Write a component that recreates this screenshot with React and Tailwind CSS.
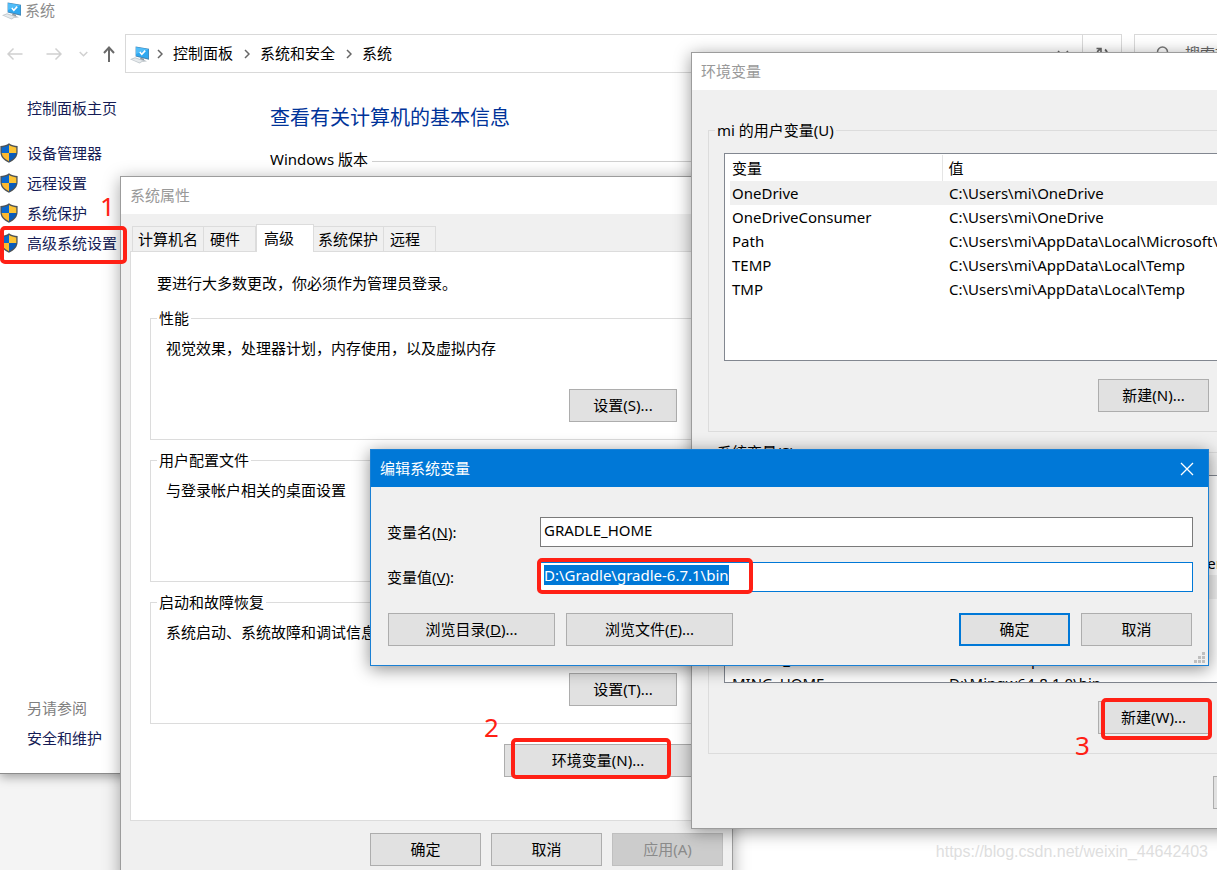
import React, { useEffect, useRef } from "react";

const userVariables = [
  ["OneDrive", "C:\\Users\\mi\\OneDrive"],
  ["OneDriveConsumer", "C:\\Users\\mi\\OneDrive"],
  ["Path", "C:\\Users\\mi\\AppData\\Local\\Microsoft\\WindowsApps"],
  ["TEMP", "C:\\Users\\mi\\AppData\\Local\\Temp"],
  ["TMP", "C:\\Users\\mi\\AppData\\Local\\Temp"],
];

const systemVariables = [
  ["ANDROID_HOME", "D:\\Android\\Sdk"],
  ["ComSpec", "C:\\WINDOWS\\system32\\cmd.exe"],
  ["DriverData", "C:\\WINDOWS\\System32\\Drivers\\DriverData"],
  ["GRADLE_HOME", "D:\\Gradle\\gradle-6.7.1\\bin"],
  ["JAVA_HOME", "D:\\Java\\jdk1.8.0"],
  ["KOTLIN", "D:\\Kotlin\\bin"],
  ["MAVEN_HOME", "D:\\Maven\\apache"],
  ["MING_HOME", "D:\\Mingw64-8.1.0\\bin"],
];

function ComputerIcon() {
  return (
    <svg className="size-5 shrink-0" viewBox="0 0 20 20" aria-hidden="true">
      <path d="M6.600 2.600 20 4.800V15.800L6.600 12.600Z" fill="#4784b0" />
      <path d="M7 3.200 19.400 5.200V14.600L7 11.800Z" fill="#2fa8f0" />
      <path d="M7 3.200 19.400 5.200 7 10Z" fill="#52bdf8" />
      <path d="m10.800 8 2 2.200 3.400-3.600" fill="none" stroke="#fff" strokeWidth="1.600" />
      <path d="M11.500 13.800 15 14.600V16.200L18 17.200 14 17.400 10.600 16Z" fill="#8f9ba3" />
      <path d="M1 15.200 6 13.200 15.400 16.600 10.600 19.400Z" fill="#c3cacf" />
      <path d="m3 15.400 3-1.200 7.400 2.600-2.800 1.600Z" fill="#e6eaec" />
    </svg>
  );
}

function ShieldIcon() {
  return (
    <svg className="h-5 w-[18px] shrink-0" viewBox="0 0 18 20" aria-hidden="true">
      <path d="M9 .3C6.600 2 3.500 3 .4 3.100V9c0 4.800 3.200 8.400 8.600 10.700C14.400 17.400 17.600 13.800 17.600 9V3.100C14.500 3 11.400 2 9 .3Z" fill="#4d5357" />
      <path d="M9 2C6.800 3.300 4.400 4.100 1.700 4.400V10H9Z" fill="#0b68cc" />
      <path d="M9 2c2.200 1.300 4.600 2.100 7.300 2.400V10H9Z" fill="#fcc434" />
      <path d="M1.700 10H9v8.200C4.700 16.200 2 13.600 1.700 10Z" fill="#fcb92e" />
      <path d="M16.300 10H9v8.200c4.300-2 7-4.600 7.300-8.200Z" fill="#0b5cba" />
    </svg>
  );
}

function Crumb({ children }) {
  return (
    <>
      <svg className="h-[10px] w-[6px] shrink-0" viewBox="0 0 6 10" fill="none" stroke="#666" strokeWidth="1.500" aria-hidden="true">
        <path d="m1 1 4 4-4 4" />
      </svg>
      <a href="#" className="mr-[11px] ml-[10px] whitespace-nowrap">{children}</a>
    </>
  );
}

function Button({ width = "w-[111px]", look = "border border-[#adadad] bg-[#e1e1e1]", children, ...rest }) {
  return (
    <button type="button" className={`h-[33px] shrink-0 whitespace-nowrap ${width} ${look}`} {...rest}>
      {children}
    </button>
  );
}

function Group({ title, className = "", children }) {
  return (
    <fieldset className={`min-w-0 border border-[#dcdcdc] ${className}`}>
      <legend className="ml-[6px] px-[2px] leading-5">{title}</legend>
      {children}
    </fieldset>
  );
}

function VariableGroup({ title, rows, selected, accessKey }) {
  return (
    <Group title={title}>
      <div className="px-[15px] pt-[13px] pb-[19px]">
        <div className="h-[208px] overflow-hidden border border-[#828790] bg-white pt-px pl-[5px]">
          <table className="w-full table-fixed text-left">
            <thead>
              <tr className="h-[26px]">
                <th className="w-[212px] pl-[2px] font-normal">变量</th>
                <th className="border-l border-[#e5e5e5] pl-[6px] font-normal">值</th>
              </tr>
            </thead>
            <tbody>
              {rows.map(([name, value], i) => (
                <tr key={name} className={i === selected ? "h-6 bg-[#f0f0f0]" : "h-6"}>
                  <td className="pl-[2px] leading-5">{name}</td>
                  <td className="pl-[7px] leading-5 whitespace-nowrap">{value}</td>
                </tr>
              ))}
            </tbody>
          </table>
        </div>
        <div className="mt-[18px] flex justify-end gap-[11px]">
          <Button>新建({accessKey})...</Button>
          <Button>编辑...</Button>
          <Button>删除</Button>
        </div>
      </div>
    </Group>
  );
}

function ControlPanelWindow() {
  return (
    <section className="relative flex h-[774px] w-full flex-col border-b border-[#8c8c8c] bg-white shadow-[0_3px_10px_rgba(0,0,0,0.35)]">
      <header className="flex h-5 items-center gap-1 pl-px text-[#8c8c8c]">
        <ComputerIcon />
        <h1>系统</h1>
      </header>
      <nav className="mt-[14px] flex h-[39px]">
        <div className="flex w-[125px] shrink-0 items-center pl-[7px] pt-px">
          <button type="button" aria-label="后退">
            <svg className="size-4" viewBox="0 0 16 16" fill="none" stroke="#d0d0d0" strokeWidth="1.500"><path d="M15.500 8H1M6.500 2.500 1 8l5.500 5.500" /></svg>
          </button>
          <button type="button" aria-label="前进" className="ml-[23px]">
            <svg className="size-4" viewBox="0 0 16 16" fill="none" stroke="#d0d0d0" strokeWidth="1.500"><path d="M.500 8H15M9.500 2.500 15 8l-5.500 5.500" /></svg>
          </button>
          <button type="button" aria-label="最近浏览的位置" className="ml-[17px]">
            <svg className="h-4 w-[9px]" viewBox="0 0 9 16" fill="none" stroke="#d0d0d0" strokeWidth="1.500"><path d="m.700 6 3.800 3.800L8.300 6" /></svg>
          </button>
          <button type="button" aria-label="上移" className="ml-[13px]">
            <svg className="size-4" viewBox="0 0 16 16" fill="none" stroke="#6a6a6a" strokeWidth="2"><path d="M8 16V2M3 7l5-5.500L13 7" /></svg>
          </button>
        </div>
        <div className="flex min-w-0 grow items-center border border-[#d9d9d9] pl-[3px]">
          <ComputerIcon />
          <div className="ml-2 flex grow items-center">
            <Crumb>控制面板</Crumb>
            <Crumb>系统和安全</Crumb>
            <Crumb>系统</Crumb>
          </div>
          <svg className="mr-[13px] h-2 w-3" viewBox="0 0 12 8" fill="none" stroke="#666" strokeWidth="1.500" aria-hidden="true"><path d="m1 1 5 5 5-5" /></svg>
          <button type="button" aria-label="刷新" className="flex h-full w-[39px] items-center justify-center border-l border-[#d9d9d9]">
            <svg className="size-4" viewBox="0 0 16 16" fill="none" stroke="#666" strokeWidth="1.600"><path d="M11 3.500A6 6 0 0 1 9 14M5 13A6 6 0 0 1 6.500 3M2.500 2.500H7V7" /></svg>
          </button>
        </div>
        <div className="ml-3 flex w-[83px] shrink-0 items-center gap-[14px] overflow-hidden border border-r-0 border-[#d9d9d9] pl-5 text-[#666]">
          <svg className="size-4 shrink-0" viewBox="0 0 16 16" fill="none" stroke="#777" strokeWidth="1.500" aria-hidden="true"><circle cx="7.500" cy="6" r="5" /><path d="M4 9.500 1 13" /></svg>
          <span className="whitespace-nowrap">搜索控制面板</span>
        </div>
      </nav>
      <div className="flex grow">
        <aside className="flex w-[270px] shrink-0 flex-col pt-[25px] pb-[25px] text-[#151c55]">
          <a href="#" className="ml-[27px] leading-5">控制面板主页</a>
          <ul className="mt-[25px] flex flex-col gap-[10px]">
            {["设备管理器", "远程设置", "系统保护", "高级系统设置"].map((item) => (
              <li key={item}>
                <a href="#" className="flex items-center gap-[9px] leading-5"><ShieldIcon />{item}</a>
              </li>
            ))}
          </ul>
          <p className="mt-auto ml-[27px] leading-5 text-[#808080]">另请参阅</p>
          <a href="#" className="mt-[10px] ml-[27px] leading-5">安全和维护</a>
        </aside>
        <main className="grow pt-[30px]">
          <h2 className="text-[20px] leading-[30px] text-[#003399]">查看有关计算机的基本信息</h2>
          <div className="mt-4 flex items-center gap-1 leading-5">
            <h3>Windows 版本</h3>
            <hr className="mt-1 grow border-[#d0d0d0]" />
          </div>
        </main>
      </div>
    </section>
  );
}

function PropertiesWindow() {
  const tab = "flex h-[25px] items-center border-t border-r border-[#dcdcdc] bg-[#f0f0f0] text-left";
  return (
    <section className="absolute top-[176px] left-[120px] w-[613px] border border-[#9c9c9c] bg-[#f0f0f0] shadow-[0_3px_16px_rgba(0,0,0,0.35)]">
      <header className="flex h-[37px] items-center bg-white pl-[9px] text-[#999]">
        <h2>系统属性</h2>
      </header>
      <div className="px-[9px] pt-[10px] pb-4">
        <div role="tablist" className="flex h-[27px] items-end pl-[2px]">
          <button type="button" role="tab" className={`${tab} w-[72px] border-l pl-[5px]`}>计算机名</button>
          <button type="button" role="tab" className={`${tab} w-[52px] pl-[6px]`}>硬件</button>
          <button type="button" role="tab" aria-selected="true" className="relative -mb-px flex h-7 w-[58px] items-center border border-b-0 border-[#dcdcdc] bg-white pl-[7px]">高级</button>
          <button type="button" role="tab" className={`${tab} w-[70px] pl-[4px]`}>系统保护</button>
          <button type="button" role="tab" className={`${tab} w-[52px] pl-[6px]`}>远程</button>
        </div>
        <div role="tabpanel" className="border border-[#dcdcdc] bg-white px-[19px] pt-[21px] pb-[43px]">
          <p className="ml-[7px] leading-5">要进行大多数更改，你必须作为管理员登录。</p>
          <div className="mt-[15px] flex flex-col gap-[10px]">
            {[
              ["性能", "视觉效果，处理器计划，内存使用，以及虚拟内存", "S"],
              ["用户配置文件", "与登录帐户相关的桌面设置", "E"],
              ["启动和故障恢复", "系统启动、系统故障和调试信息", "T"],
            ].map(([title, text, key]) => (
              <Group key={title} title={title} className="h-[132px]">
                <div className="flex flex-col pt-[10px] pr-[25px] pl-[15px]">
                  <p className="leading-5">{text}</p>
                  <div className="mt-[31px] flex justify-end">
                    <Button width="w-[108px]">设置({key})...</Button>
                  </div>
                </div>
              </Group>
            ))}
          </div>
          <div className="mt-5 flex justify-end pr-[11px]">
            <Button width="w-[188px]">环境变量(N)...</Button>
          </div>
        </div>
        <footer className="mt-3 flex justify-end gap-[10px]">
          <Button>确定</Button>
          <Button>取消</Button>
          <Button look="border border-[#bfbfbf] bg-[#cccccc] text-[#8a8a8a]" disabled>应用(A)</Button>
        </footer>
      </div>
    </section>
  );
}

function EnvironmentWindow() {
  return (
    <section className="absolute top-[52px] left-[691px] w-[795px] border border-[#9c9c9c] bg-[#f0f0f0] shadow-[0_3px_16px_rgba(0,0,0,0.4)]">
      <header className="flex h-[37px] items-center bg-white pl-[9px] text-[#999]">
        <h2>环境变量</h2>
      </header>
      <div className="px-4 pt-[30px] pb-[19px]">
        <div className="flex flex-col gap-[10px]">
          <VariableGroup title="mi 的用户变量(U)" rows={userVariables} selected={0} accessKey="N" />
          <VariableGroup title="系统变量(S)" rows={systemVariables} selected={3} accessKey="W" />
        </div>
        <footer className="mt-[22px] flex justify-end gap-[11px] pr-[23px]">
          <Button>确定</Button>
          <Button>取消</Button>
        </footer>
      </div>
    </section>
  );
}

function EditDialog() {
  const valueRef = useRef(null);
  useEffect(() => {
    valueRef.current.focus({ preventScroll: true });
    valueRef.current.select();
  }, []);
  const field = "h-[30px] min-w-0 grow border bg-white px-[3px] pt-[2px] pb-[6px] leading-5 outline-none";
  return (
    <section role="dialog" aria-labelledby="edit-title" className="absolute top-[449px] left-[370px] w-[839px] border border-[#1a80d4] bg-[#f0f0f0] shadow-[0_3px_16px_rgba(0,0,0,0.45)]">
      <header className="flex h-[37px] items-center justify-between bg-[#0078d7] pr-[14px] pl-[9px] text-white">
        <h2 id="edit-title">编辑系统变量</h2>
        <button type="button" aria-label="关闭">
          <svg className="size-[14px]" viewBox="0 0 14 14" fill="none" stroke="#fff" strokeWidth="1.300"><path d="m1 1 12 12M13 1 1 13" /></svg>
        </button>
      </header>
      <form className="px-[15px] pt-[30px] pb-[19px]">
        <div className="flex flex-col gap-[15px]">
          <div className="flex items-center">
            <label htmlFor="var-name" className="w-[154px] shrink-0 pl-px">变量名(<u>N</u>):</label>
            <input id="var-name" type="text" defaultValue="GRADLE_HOME" className={`${field} border-[#7a7a7a]`} />
          </div>
          <div className="flex items-center">
            <label htmlFor="var-value" className="w-[154px] shrink-0 pl-px">变量值(<u>V</u>):</label>
            <input ref={valueRef} id="var-value" type="text" defaultValue="D:\Gradle\gradle-6.7.1\bin" className={`${field} border-[#0078d7] selection:bg-[#0078d7] selection:text-white`} />
          </div>
        </div>
        <div className="mt-[21px] flex gap-[11px] pr-px pl-[2px]">
          <Button width="w-[167px]">浏览目录(<u>D</u>)...</Button>
          <Button width="w-[167px]">浏览文件(<u>F</u>)...</Button>
          <div className="ml-auto flex gap-[11px]">
            <Button look="border-2 border-[#0078d7] bg-[#e1e1e1]">确定</Button>
            <Button>取消</Button>
          </div>
        </div>
      </form>
      <svg className="absolute right-[3px] bottom-[2px] size-[11px]" viewBox="0 0 11 11" fill="#bfbfbf" aria-hidden="true">
        <path d="M8 0h3v3H8zM4 4h3v3H4zM8 4h3v3H8zM0 8h3v3H0zM4 8h3v3H4zM8 8h3v3H8z" />
      </svg>
    </section>
  );
}

function Annotations() {
  const box = "absolute rounded-[5px] border-4 border-[#ff2015]";
  const digit = "absolute text-[26px] leading-8 text-[#ff2015]";
  return (
    <div className="pointer-events-none">
      <div className={`${box} top-[226px] left-0 h-[38px] w-[127px]`} />
      <div className={`${box} top-[738px] left-[511px] h-[41px] w-[160px]`} />
      <div className={`${box} top-[698px] left-[1101px] h-[42px] w-[111px]`} />
      <div className={`${box} top-[558px] left-[537px] h-[36px] w-[216px]`} />
      <span className={`${digit} top-[190px] left-[100px]`}>1</span>
      <span className={`${digit} top-[711px] left-[484px]`}>2</span>
      <span className={`${digit} top-[729px] left-[1075px]`}>3</span>
      <span className="absolute right-[9px] bottom-2 font-['Liberation_Sans',sans-serif] text-[16px] leading-5 text-[#dedede]">https://blog.csdn.net/weixin_44642403</span>
    </div>
  );
}

export default function App() {
  return (
    <div className="relative min-h-screen w-full overflow-hidden bg-[linear-gradient(to_right,#f4f4f4_50%,#ffffff_50%)] font-['Noto_Sans','Noto_Sans_CJK_SC',sans-serif] text-[15px] text-black">
      <ControlPanelWindow />
      <PropertiesWindow />
      <EnvironmentWindow />
      <EditDialog />
      <Annotations />
    </div>
  );
}
